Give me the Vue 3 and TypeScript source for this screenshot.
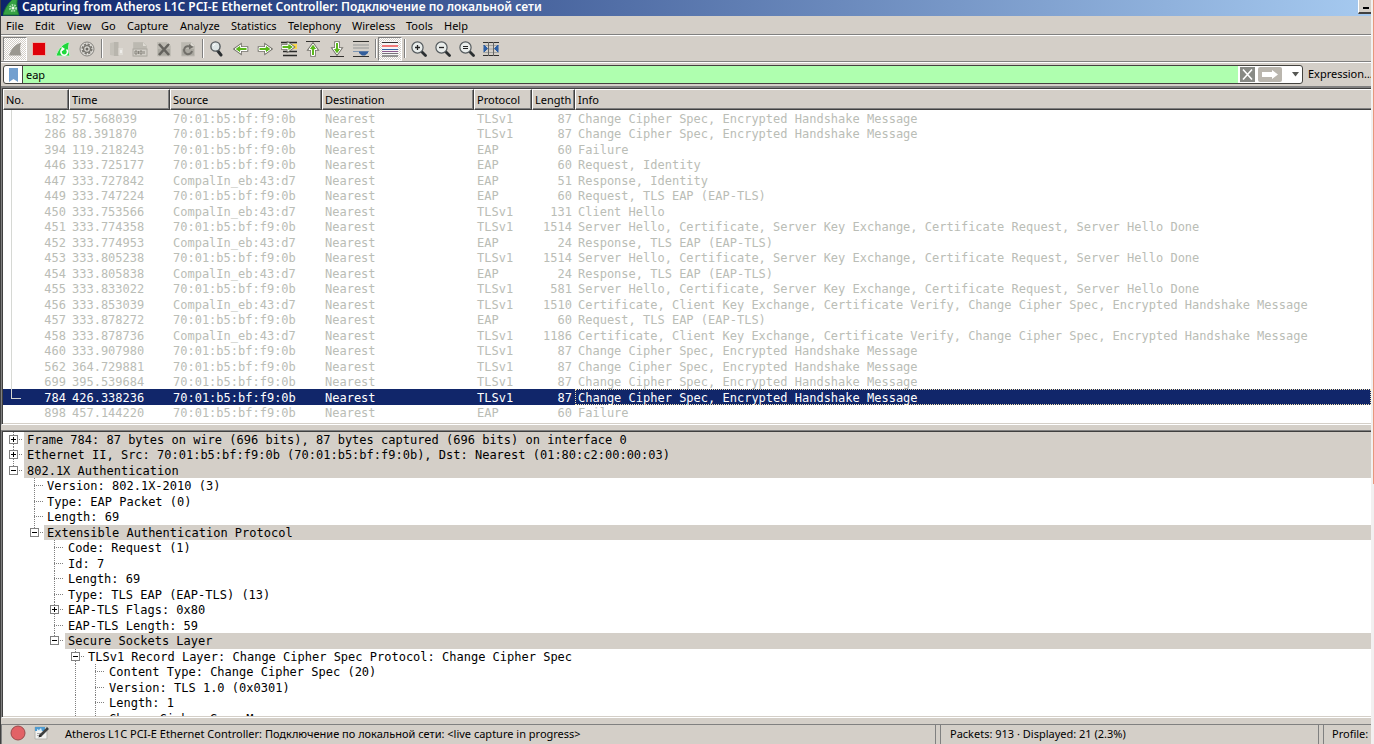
<script setup lang="ts">
import { ref } from 'vue'

interface Tool { icon: string; label: string; pressed?: boolean; disabled?: boolean }
interface Packet { no: number; time: string; src: string; proto: string; len: number; info: string }
interface Node { depth: number; text: string; toggle?: '+' | '-'; shaded?: boolean; last?: boolean; through?: number[] }

const menus = ['File', 'Edit', 'View', 'Go', 'Capture', 'Analyze', 'Statistics', 'Telephony', 'Wireless', 'Tools', 'Help']

const arrow = 'fill="#5cb81c" stroke="#fff" stroke-width="1"'
const halo = 'fill="none" stroke="#77756f" stroke-width="2.600"'
const lens = '<path d="M10.500 10.500L14.500 14.500" stroke="#2b2f31" stroke-width="2.800" stroke-linecap="round"/><circle cx="6.500" cy="6.500" r="5.600" fill="#e9edeb" stroke="#555b5e" stroke-width="1.200"/>'
const page = '<path d="M1.500 1.500H11L14.500 5V15H1.500Z" fill="#aaa8a0" stroke="#c0bdb5"/><path d="M2 2H11V5H14V8H2Z" fill="#bcb9b1"/><path d="M11 1.500V5H14.500Z" fill="#dedbd4"/>'
const arrowIcon = (d: string) => `<path d="${d}" ${halo}/><path d="${d}" ${arrow}/>`

const icons: Record<string, string> = {
  fin: '<path d="M2 14.500C4 8 8 3 14 2C12.500 6 13 11 14.500 14.500Z" fill="#9b9890"/>',
  stop: '<rect x="1.500" y="1.500" width="13" height="13" fill="#df0009" stroke="#e9b5ad"/>',
  restart: '<path d="M1 15C3 8 8 2 14.500 1C12.800 6 13.500 11 15 15Z" fill="#1fd83c" stroke="#c5eac5"/><path d="M11.500 8.500A3.300 3.300 0 1 1 7 8.500" fill="none" stroke="#fff" stroke-width="1.600"/><path d="M6.500 5.500L10 8L6.500 10.500Z" fill="#fff"/>',
  gear: '<circle cx="8" cy="8" r="7" fill="#dedcd7" stroke="#85837e" stroke-width="1"/><circle cx="8" cy="8" r="4.600" fill="none" stroke="#77756f" stroke-width="1.800" stroke-dasharray="2.200 1.413"/><circle cx="8" cy="8" r="3.400" fill="none" stroke="#77756f" stroke-width="1.300"/><circle cx="8" cy="8" r="1.500" fill="#6c6a65"/>',
  folder: '<path d="M2 2L7 1V15L2 14Z" fill="#c4c1b9"/><path d="M6 1H10.500V15H6Z" fill="#b8b5ad"/><path d="M10.500 7H15V14H10.500Z" fill="#dedbd5"/><path d="M13 9V12" stroke="#fff" stroke-width="1"/>',
  save: page + '<rect x="1" y="8" width="14" height="7" fill="#d2cfc8" stroke="#aaa79f" stroke-width="1"/><path d="M3 10H5V13H3ZM6.500 13V10M8 10H10V13H8ZM12 13V10" fill="none" stroke="#85827b"/>',
  close: page + '<path d="M3 3L13 14M13 3L3 14" stroke="#65635e" stroke-width="2.600"/>',
  reload: page + '<path d="M12 10A4 4 0 1 1 10.500 6" fill="none" stroke="#716f69" stroke-width="2"/><path d="M9 3L13.500 6L9 8.500Z" fill="#716f69"/>',
  find: '<path d="M8.500 9.500L12 14" stroke="#2b2f31" stroke-width="3" stroke-linecap="round"/><circle cx="6.500" cy="5.500" r="4.600" fill="#dfe6e6" stroke="#555b5e" stroke-width="1.400"/><path d="M4.300 5A2.500 2.500 0 0 1 6.500 3" fill="none" stroke="#fff"/>',
  back: arrowIcon('M14 6.500H7.500V4L2 8L7.500 12V9.500H14Z'),
  forward: arrowIcon('M2 6.500H8.500V4L14 8L8.500 12V9.500H2Z'),
  goto: '<path d="M0 1.500H16M2 10.500H16M2 14.500H16" stroke="#2a2a28" stroke-width="1.300"/><path d="M10 3H16V8H10Z" fill="#fbd84a"/>' + `<g transform="translate(0 -2)">${arrowIcon('M1 6.500H7V4L12.500 8L7 12V9.500H1Z')}</g>`,
  first: '<path d="M1 0.500H15" stroke="#33322f" stroke-width="1"/>' + arrowIcon('M6.500 14.500V8.500H4L8 3L12 8.500H9.500V14.500Z'),
  last: '<path d="M1 15.500H15" stroke="#33322f" stroke-width="1"/>' + arrowIcon('M6.500 1.500V7.500H4L8 13L12 7.500H9.500V1.500Z'),
  autoscroll: '<path d="M0 0.500H16" stroke="#33322f"/><path d="M0 4H16M0 7H16" stroke="#a9aba6" stroke-width="1.500"/><path d="M0 10.500H16" stroke="#7f96b2"/><path d="M6 10.500H15V12L12 14.500H9L6 12Z" fill="#345f9c"/><path d="M0 15.500H16" stroke="#33322f"/>',
  colorize: '<rect width="16" height="16" fill="#f6f6f6"/><path d="M0 1.500H16" stroke="#33322f"/><path d="M0 5H16" stroke="#ef2929" stroke-width="1.200"/><path d="M0 8.500H16" stroke="#3465a4"/><path d="M0 10.500H16" stroke="#8a5a8c"/><path d="M0 15H16" stroke="#33322f"/><path d="M0 12.500H16" stroke="#77747a"/>',
  zoomin: lens + '<path d="M4 6.500H9M6.500 4V9" stroke="#222" stroke-width="1.300"/>',
  zoomout: lens + '<path d="M4 6.500H9" stroke="#222" stroke-width="1.300"/>',
  zoomreset: lens + '<path d="M4 5.500H9M4 7.500H9" stroke="#222"/>',
  columns: '<path d="M0 1.500H16M0 14.500H16" stroke="#33322f"/><path d="M0 4.500H16M0 8H16M0 11.500H16" stroke="#a5a6a2"/><path d="M5.500 1V15M10.500 1V15" stroke="#666" stroke-width="1"/><path d="M1 4L4.500 7.500L1 11ZM15 4L11.500 7.500L15 11Z" fill="#2c5fa5" stroke="#2c5fa5"/>',
}

const groups: Tool[][] = [
  [
    { icon: 'fin', label: 'Start capturing packets', pressed: true },
    { icon: 'stop', label: 'Stop capturing packets' },
    { icon: 'restart', label: 'Restart current capture' },
    { icon: 'gear', label: 'Capture options' },
  ],
  [
    { icon: 'folder', label: 'Open a capture file', disabled: true },
    { icon: 'save', label: 'Save this capture file', disabled: true },
    { icon: 'close', label: 'Close this capture file', disabled: true },
    { icon: 'reload', label: 'Reload this file', disabled: true },
  ],
  [
    { icon: 'find', label: 'Find a packet' },
    { icon: 'back', label: 'Go back' },
    { icon: 'forward', label: 'Go forward' },
    { icon: 'goto', label: 'Go to packet' },
    { icon: 'first', label: 'Go to the first packet' },
    { icon: 'last', label: 'Go to the last packet' },
    { icon: 'autoscroll', label: 'Auto scroll' },
  ],
  [{ icon: 'colorize', label: 'Colorize packets', pressed: true }],
  [
    { icon: 'zoomin', label: 'Zoom in' },
    { icon: 'zoomout', label: 'Zoom out' },
    { icon: 'zoomreset', label: 'Normal size' },
    { icon: 'columns', label: 'Resize columns' },
  ],
]

const filter = ref('eap')
const selected = ref(784)

const A = '70:01:b5:bf:f9:0b'
const B = 'CompalIn_eb:43:d7'
const change = 'Change Cipher Spec, Encrypted Handshake Message'
const server = 'Server Hello, Certificate, Server Key Exchange, Certificate Request, Server Hello Done'
const client = 'Certificate, Client Key Exchange, Certificate Verify, Change Cipher Spec, Encrypted Handshake Message'
const p = (no: number, time: string, src: string, proto: string, len: number, info: string): Packet => ({ no, time, src, proto, len, info })

const packets: Packet[] = [
  p(182, '57.568039', A, 'TLSv1', 87, change),
  p(286, '88.391870', A, 'TLSv1', 87, change),
  p(394, '119.218243', A, 'EAP', 60, 'Failure'),
  p(446, '333.725177', A, 'EAP', 60, 'Request, Identity'),
  p(447, '333.727842', B, 'EAP', 51, 'Response, Identity'),
  p(449, '333.747224', A, 'EAP', 60, 'Request, TLS EAP (EAP-TLS)'),
  p(450, '333.753566', B, 'TLSv1', 131, 'Client Hello'),
  p(451, '333.774358', A, 'TLSv1', 1514, server),
  p(452, '333.774953', B, 'EAP', 24, 'Response, TLS EAP (EAP-TLS)'),
  p(453, '333.805238', A, 'TLSv1', 1514, server),
  p(454, '333.805838', B, 'EAP', 24, 'Response, TLS EAP (EAP-TLS)'),
  p(455, '333.833022', A, 'TLSv1', 581, server),
  p(456, '333.853039', B, 'TLSv1', 1510, client),
  p(457, '333.878272', A, 'EAP', 60, 'Request, TLS EAP (EAP-TLS)'),
  p(458, '333.878736', B, 'TLSv1', 1186, client),
  p(460, '333.907980', A, 'TLSv1', 87, change),
  p(562, '364.729881', A, 'TLSv1', 87, change),
  p(699, '395.539684', A, 'TLSv1', 87, change),
  p(784, '426.338236', A, 'TLSv1', 87, change),
  p(898, '457.144220', A, 'EAP', 60, 'Failure'),
]

const nodes: Node[] = [
  { depth: 0, text: 'Frame 784: 87 bytes on wire (696 bits), 87 bytes captured (696 bits) on interface 0', toggle: '+', shaded: true },
  { depth: 0, text: 'Ethernet II, Src: 70:01:b5:bf:f9:0b (70:01:b5:bf:f9:0b), Dst: Nearest (01:80:c2:00:00:03)', toggle: '+', shaded: true },
  { depth: 0, text: '802.1X Authentication', toggle: '-', shaded: true, last: true },
  { depth: 1, text: 'Version: 802.1X-2010 (3)' },
  { depth: 1, text: 'Type: EAP Packet (0)' },
  { depth: 1, text: 'Length: 69' },
  { depth: 1, text: 'Extensible Authentication Protocol', toggle: '-', shaded: true, last: true },
  { depth: 2, text: 'Code: Request (1)' },
  { depth: 2, text: 'Id: 7' },
  { depth: 2, text: 'Length: 69' },
  { depth: 2, text: 'Type: TLS EAP (EAP-TLS) (13)' },
  { depth: 2, text: 'EAP-TLS Flags: 0x80', toggle: '+' },
  { depth: 2, text: 'EAP-TLS Length: 59' },
  { depth: 2, text: 'Secure Sockets Layer', toggle: '-', shaded: true, last: true },
  { depth: 3, text: 'TLSv1 Record Layer: Change Cipher Spec Protocol: Change Cipher Spec', toggle: '-' },
  { depth: 4, text: 'Content Type: Change Cipher Spec (20)', through: [3] },
  { depth: 4, text: 'Version: TLS 1.0 (0x0301)', through: [3] },
  { depth: 4, text: 'Length: 1', through: [3] },
  { depth: 4, text: 'Change Cipher Spec Message', through: [3] },
]
</script>

<template>
  <div class="window">
    <main class="app">
      <header class="title">
        <svg class="logo" width="17" height="16" viewBox="0 0 17 16" aria-hidden="true">
          <path d="M0 15C2 7 7 0 15 -4C13 3 14 10 16 15Z" fill="#35a244" stroke="#1c7432" />
          <circle cx="10" cy="8" r="3" fill="none" stroke="#a9dfae" stroke-width="2" stroke-dasharray="1.500 1" />
          <circle cx="10" cy="8" r="1.500" fill="#eefbee" />
        </svg>
        <h1>Capturing from Atheros L1C PCI-E Ethernet Controller: Подключение по локальной сети</h1>
        <button class="minimize" aria-label="Minimize"><i></i></button>
      </header>

      <nav class="menu">
        <button v-for="m in menus" :key="m">{{ m }}</button>
      </nav>

      <div class="tools" role="toolbar" aria-label="Main toolbar">
        <div v-for="(g, gi) in groups" :key="gi" class="group">
          <button v-for="t in g" :key="t.icon" class="tool" :class="{ pressed: t.pressed }" :aria-label="t.label" :disabled="t.disabled">
            <svg width="16" height="16" viewBox="0 0 16 16" v-html="icons[t.icon]"></svg>
          </button>
        </div>
      </div>

      <div class="filterbar">
        <div class="filter">
          <button class="bookmark" aria-label="Filter bookmarks">
            <svg width="9" height="14" viewBox="0 0 9 14"><path d="M0 0H9V14L4.500 11L0 14Z" fill="#729fcf" /></svg>
          </button>
          <input v-model="filter" aria-label="Display filter" spellcheck="false" />
          <button class="clear" aria-label="Clear filter">
            <svg width="15" height="15" viewBox="0 0 15 15"><path d="M3 2.500L12 12.500M12 2.500L3 12.500" stroke="#fff" stroke-width="1.600" /></svg>
          </button>
          <button class="apply" aria-label="Apply filter">
            <svg width="24" height="15" viewBox="0 0 24 15"><path d="M4 5H14V3L20 7.500L14 12V10H4Z" fill="#fff" /></svg>
          </button>
          <button class="recent" aria-label="Recent filters">
            <svg width="7" height="5" viewBox="0 0 7 5"><path d="M0 0H7L3.500 4.500Z" fill="#555753" /></svg>
          </button>
        </div>
        <button class="expression">Expression…</button>
      </div>

      <section class="pane packets">
        <table>
          <colgroup>
            <col class="c-no" /><col class="c-time" /><col class="c-addr" /><col class="c-addr" /><col class="c-proto" /><col class="c-len" /><col />
          </colgroup>
          <thead>
            <tr><th>No.</th><th>Time</th><th>Source</th><th>Destination</th><th>Protocol</th><th>Length</th><th>Info</th></tr>
          </thead>
          <tbody>
            <tr v-for="k in packets" :key="k.no" :class="{ selected: k.no === selected }" @click="selected = k.no">
              <td class="num" :class="{ trail: k.no < 784, end: k.no === 784 }">{{ k.no }}</td>
              <td>{{ k.time }}</td>
              <td>{{ k.src }}</td>
              <td>Nearest</td>
              <td>{{ k.proto }}</td>
              <td class="num">{{ k.len }}</td>
              <td class="info">{{ k.info }}</td>
            </tr>
          </tbody>
        </table>
      </section>

      <section class="pane details">
        <ul>
          <li v-for="(n, i) in nodes" :key="i">
            <span v-for="d in n.depth" :key="d" class="guide" :class="{ line: n.through?.includes(d - 1) }"></span>
            <span class="guide branch" :class="{ line: !n.last, half: n.last }">
              <button v-if="n.toggle" class="toggle" :class="{ plus: n.toggle === '+' }" :aria-label="n.toggle === '+' ? 'Expand' : 'Collapse'"></button>
            </span>
            <span class="text" :class="{ shaded: n.shaded }">{{ n.text }}</span>
          </li>
        </ul>
      </section>

      <footer class="status">
        <div class="panel source">
          <button aria-label="Expert information">
            <svg width="16" height="16" viewBox="0 0 16 16"><circle cx="8" cy="8" r="7" fill="#e26266" stroke="#9a4a4b" /></svg>
          </button>
          <button aria-label="Capture file comment">
            <svg width="16" height="16" viewBox="0 0 16 16">
              <path d="M1 2H13V14H1Z" fill="#f1f2f0" stroke="#b4b4ae" />
              <path d="M1 2H11V6H1Z" fill="#4f9bd0" />
              <path d="M3 4L5 5L7 3L8 6H3Z" fill="#d7ecf7" />
              <path d="M3 8.500H7M3 10.500H6" stroke="#aaa" />
              <path d="M6 11L14 3" stroke="#3e4040" stroke-width="2.600" />
              <path d="M4.500 12.500L5.500 9.500L7.500 11.500Z" fill="#222" />
            </svg>
          </button>
          <span>Atheros L1C PCI-E Ethernet Controller: Подключение по локальной сети: &lt;live capture in progress&gt;</span>
        </div>
        <div class="panel counts">Packets: 913 · Displayed: 21 (2.3%)</div>
        <div class="panel profile">Profile: Default</div>
      </footer>
    </main>
    <div class="edge"></div>
  </div>
</template>

<style>
body {
  margin: 0;
  overflow: hidden;
}
</style>

<style scoped>
.window {
  display: flex;
  height: 100vh;
  font: 11px/14px "Noto Sans", "Open Sans", sans-serif;
  color: #000;
  background: #d4cfc8;
}
.window * {
  box-sizing: border-box;
}
button {
  margin: 0;
  padding: 0;
  border: 0;
  background: none;
  font: inherit;
  color: inherit;
}
svg {
  display: block;
}
.app {
  flex: 1;
  min-width: 0;
  display: flex;
  flex-direction: column;
  border-left: 1px solid #404040;
}
.edge {
  width: 3px;
  background: linear-gradient(#e8977c 65%, #f0f0f0 65%) right / 1px 100% no-repeat, #f2f0f0;
}

.title {
  display: flex;
  align-items: flex-start;
  height: 16px;
  padding-left: 2px;
  overflow: hidden;
  color: #fff;
  background: linear-gradient(90deg, #0d246b, #a6caf0);
}
.logo {
  margin-right: 2px;
}
.title h1 {
  flex: 1;
  margin: 0;
  font: 600 12px/14px "Noto Sans", "Open Sans", sans-serif;
  white-space: nowrap;
}
.minimize {
  display: flex;
  align-items: flex-end;
  width: 13px;
  height: 14px;
  padding: 0 0 3px 4px;
  background: #d4cfc8;
  border-left: 1px solid #fff;
  border-bottom: 2px solid #404040;
}
.minimize i {
  width: 6px;
  height: 2px;
  background: #000;
}

.menu {
  display: grid;
  grid-template-columns: 29px 32px 34px 26px 53px 51px 57px 64px 54px 38px 1fr;
  height: 20px;
  padding-left: 5px;
  border-bottom: 1px solid #fff;
  box-shadow: inset 0 -1px #808080;
}
.menu button {
  text-align: left;
  line-height: 18px;
}

.tools {
  display: flex;
  height: 27px;
  padding: 1px 2px;
  border-bottom: 1px solid #fff;
  box-shadow: inset 0 -1px #808080;
}
.group {
  display: flex;
}
.group + .group::before {
  content: "";
  width: 0;
  height: 19px;
  margin: 2px 1px 0 2px;
  border-left: 1px solid #808080;
  border-right: 1px solid #fff;
}
.tool {
  display: grid;
  place-items: center;
  width: 24px;
  height: 24px;
}
.pressed {
  border: 1px solid;
  border-color: #808080 #fff #fff #808080;
  background: repeating-conic-gradient(#fff 0 25%, #d4cfc8 0 50%) 0 0 / 2px 2px;
}

.filterbar {
  display: flex;
  align-items: flex-start;
  height: 23px;
  padding: 2px 0 0 2px;
}
.filter {
  flex: 1;
  display: flex;
  align-items: center;
  height: 19px;
  border: 1px solid #44433f;
  border-radius: 3px;
  background: #fff;
  overflow: hidden;
}
.bookmark {
  display: grid;
  place-items: center;
  width: 19px;
  height: 17px;
  border-right: 1px solid #44433f;
}
.filter input {
  flex: 1;
  min-width: 0;
  height: 17px;
  padding: 0 3px;
  border: 0;
  outline: 0;
  background: #afffaf;
  font: inherit;
  color: #000;
}
.clear {
  margin-left: 2px;
  background: #888a85;
}
.apply {
  margin-left: 3px;
  border-radius: 2px;
  background: #bab6ae;
}
.recent {
  display: grid;
  place-items: center;
  width: 20px;
  padding-left: 6px;
}
.expression {
  width: 68px;
  padding-left: 5px;
  overflow: hidden;
  white-space: nowrap;
  text-align: left;
  line-height: 18px;
}

.pane {
  border-top: 1px solid #808080;
  border-left: 1px solid #808080;
  border-bottom: 1px solid #fff;
  background: #fff;
  box-shadow: inset 1px 1px #404040, inset 0 -1px #d4cfc8;
  font: 12px/15px "DejaVu Sans Mono", monospace;
  overflow: hidden;
}
.packets {
  border-top-width: 2px;
  padding: 1px 0 4px 1px;
}
table {
  width: 100%;
  table-layout: fixed;
  border-collapse: separate;
  border-spacing: 0;
}
.c-no { width: 66px; }
.c-time { width: 101px; }
.c-addr { width: 152px; }
.c-proto { width: 58px; }
.c-len { width: 43px; }
th {
  height: 21px;
  padding: 0 0 0 2px;
  border: 1px solid;
  border-color: #fff #404040 #404040 #fff;
  background: #d4cfc8;
  box-shadow: inset -1px -1px #808080;
  font: 11px/18px "Noto Sans", "Open Sans", sans-serif;
  text-align: left;
}
th:last-child {
  border-right: 0;
  box-shadow: inset 0 -1px #808080;
}
td {
  position: relative;
  height: 15px;
  padding: 1px 0 0 3px;
  line-height: 14px;
  vertical-align: bottom;
  white-space: nowrap;
  color: #babdb6;
}
tbody tr:nth-child(odd) td {
  height: 16px;
}
.num {
  padding: 1px 3px 0 0;
  text-align: right;
}
.trail::before,
.end::before {
  content: "";
  position: absolute;
  left: 8px;
  top: 0;
  height: 100%;
  border-left: 1px solid #d6d8d4;
}
.end::before {
  width: 9px;
  height: 9px;
  border-bottom: 1px solid #d6d8d4;
}
.selected td {
  background: #11266a;
  color: #fff;
}
.selected .info {
  outline: 1px dotted #f3e2b0;
  outline-offset: -1px;
}

.details {
  flex: 1;
  min-height: 0;
  margin: 5px 0 6px;
  padding: 1px 0 1px 1px;
}
ul {
  height: 100%;
  margin: 0;
  padding: 0;
  list-style: none;
  overflow: hidden;
}
li {
  display: flex;
  height: 16px;
}
li:nth-child(odd) {
  height: 15px;
}
.guide {
  position: relative;
  flex: none;
  width: 20px;
}
.guide:nth-child(odd) {
  width: 21px;
}
.line::before,
.half::before {
  content: "";
  position: absolute;
  left: 10px;
  top: 0;
  width: 1px;
  height: 100%;
  background: repeating-linear-gradient(#808080 0 1px, transparent 1px 2px);
}
.half::before {
  height: 8px;
}
.branch::after {
  content: "";
  position: absolute;
  left: 10px;
  right: 1px;
  top: 7px;
  height: 1px;
  background: repeating-linear-gradient(90deg, #808080 0 1px, transparent 1px 2px);
}
.toggle {
  position: absolute;
  z-index: 1;
  left: 6px;
  top: 3px;
  width: 9px;
  height: 9px;
  border: 1px solid #808080;
  background: linear-gradient(#000, #000) center / 5px 1px no-repeat, #fff;
}
.toggle.plus {
  background: linear-gradient(#000, #000) center / 5px 1px no-repeat, linear-gradient(#000, #000) center / 1px 5px no-repeat, #fff;
}
.text {
  flex: 1;
  padding: 1px 0 0 3px;
  white-space: nowrap;
}
.shaded {
  background: #d4cfc8;
}

.status {
  display: flex;
  gap: 4px;
  height: 20px;
  border-top: 1px solid #808080;
  line-height: 18px;
  white-space: nowrap;
}
.panel {
  overflow: hidden;
  border-left: 1px solid #808080;
}
.source {
  flex: 1;
  display: flex;
  align-items: flex-start;
  gap: 8px;
  padding-left: 8px;
  border-right: 1px solid #808080;
}
.source span {
  margin-left: 7px;
}
.counts {
  width: 379px;
  padding-left: 9px;
  border-right: 1px solid #808080;
}
.profile {
  width: 48px;
  padding-left: 8px;
}
</style>
